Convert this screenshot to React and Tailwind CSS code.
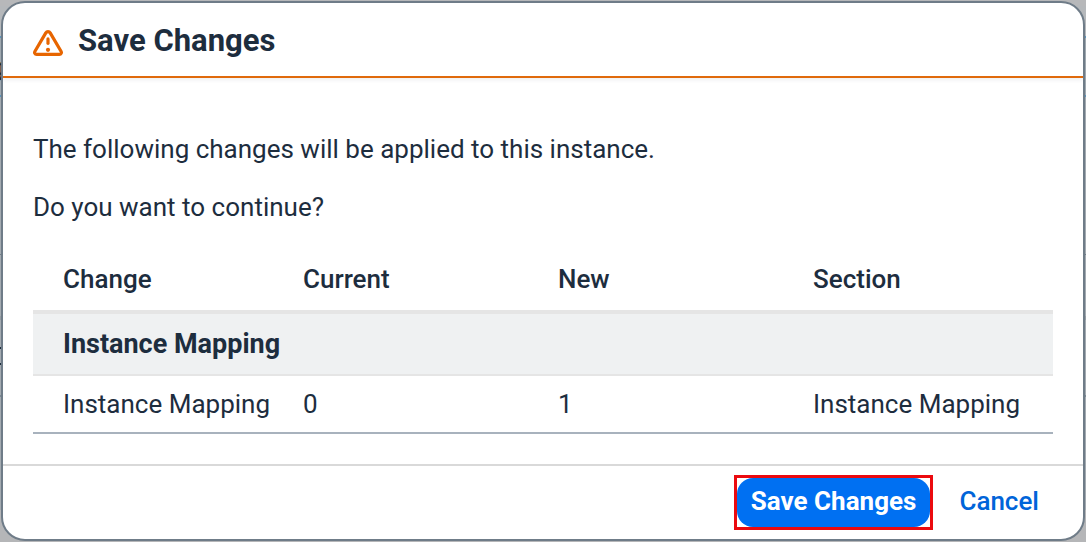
const columns = ["Change", "Current", "New", "Section"];

const groups = [
  {
    name: "Instance Mapping",
    changes: [{ change: "Instance Mapping", current: "0", next: "1", section: "Instance Mapping" }],
  },
];

function WarningIcon() {
  return (
    <svg viewBox="0 0 30 26" className="mt-1 h-[26px] w-[30px] shrink-0" fill="none" stroke="#e76500" strokeLinecap="round" strokeLinejoin="round" aria-hidden="true">
      <path strokeWidth="3.2" d="M12.8 2.9 2 21.2C1.1 22.8 1.8 24.3 3.6 24.3H26.4C28.2 24.3 28.9 22.8 28 21.2L17.2 2.9C16.2 1.3 13.8 1.3 12.8 2.9Z" />
      <path strokeWidth="3.2" d="M15 8.9V13.3" />
      <circle cx="15" cy="19.8" r="2.1" fill="#e76500" stroke="none" />
    </svg>
  );
}

function Backdrop() {
  return (
    <div aria-hidden="true" className="absolute inset-0 flex flex-col overflow-hidden bg-[#a4abb1]">
      <div className="h-1.5 bg-[#b7b8ba]" />
      <div className="h-[30px] bg-[#b5b8bb]" />
      <div className="h-[61px] border-y-2 border-[#5b93b8] bg-[#a0a9b0]" />
      <div className="h-[158px] border-b border-[#707d88]" />
      <div className="h-[61px]" />
      <div className="h-1 bg-[#949ca2]" />
      <div className="h-[27px]" />
      <div className="h-[18px] w-[5px] border-y-2 border-[#1d2d3e]" />
      <div className="h-[32px] border-b-2 border-[#7b8994]" />
      <div className="grow" />
      <div className="h-8 bg-[#b5b6b8]" />
    </div>
  );
}

export default function App() {
  return (
    <div className="relative min-h-screen font-['Roboto','Noto_Sans',sans-serif] text-[26px] leading-8 text-[#1d2d3e]">
      <Backdrop />
      <span aria-hidden="true" className="absolute -left-2.5 top-[51px] leading-8">g</span>
      <div className="relative p-px">
        <section role="alertdialog" aria-labelledby="dialog-title" className="overflow-hidden rounded-3xl border-2 border-[#6f7c88] bg-white">
          <header className="relative flex h-[75px] items-center gap-[15px] border-b-2 border-[#e06a0c] px-[30px] pt-0.5 shadow-[0_2px_4px_rgba(34,53,72,0.08)]">
            <WarningIcon />
            <h1 id="dialog-title" className="text-[31px] leading-9 font-bold">Save Changes</h1>
          </header>

          <div className="px-[30px] pt-[55px] pb-[30px]">
            <p>The following changes will be applied to this instance.</p>
            <p className="mt-[26px]">Do you want to continue?</p>

            <table className="mt-6 w-full table-fixed border-separate border-spacing-0 text-left">
              <colgroup>
                <col className="w-60" />
                <col className="w-1/4" />
                <col className="w-1/4" />
                <col />
              </colgroup>
              <thead>
                <tr>
                  {columns.map((name) => (
                    <th key={name} scope="col" className="h-[67px] border-b-4 border-[#e5e5e5] pl-[30px] font-medium">{name}</th>
                  ))}
                </tr>
              </thead>
              {groups.map((group) => (
                <tbody key={group.name}>
                  <tr>
                    <th scope="rowgroup" colSpan={4} className="h-[62px] border-b-2 border-[#e5e5e5] bg-[#eff1f2] pl-[30px] text-[27px] font-bold">{group.name}</th>
                  </tr>
                  {group.changes.map((row) => (
                    <tr key={row.change}>
                      <td className="h-[58px] border-b-2 border-[#a8b2bd] pl-[30px] whitespace-nowrap">{row.change}</td>
                      <td className="border-b-2 border-[#a8b2bd] pl-[30px]">{row.current}</td>
                      <td className="border-b-2 border-[#a8b2bd] pl-[30px]">{row.next}</td>
                      <td className="border-b-2 border-[#a8b2bd] pl-[30px] whitespace-nowrap">{row.section}</td>
                    </tr>
                  ))}
                </tbody>
              ))}
            </table>
          </div>

          <footer className="flex items-center justify-end gap-3 border-t-2 border-[#d9d9d9] px-[30px] py-[9px]">
            <div className="border-[3px] border-[#eb0a0f]">
              <button type="button" className="block h-[49px] rounded-2xl bg-[#0070f2] px-3.5 pb-[3px] font-bold whitespace-nowrap text-white">Save Changes</button>
            </div>
            <button type="button" className="h-[49px] rounded-2xl px-3.5 pb-[3px] font-medium text-[#0064d9]">Cancel</button>
          </footer>
        </section>
      </div>
    </div>
  );
}
